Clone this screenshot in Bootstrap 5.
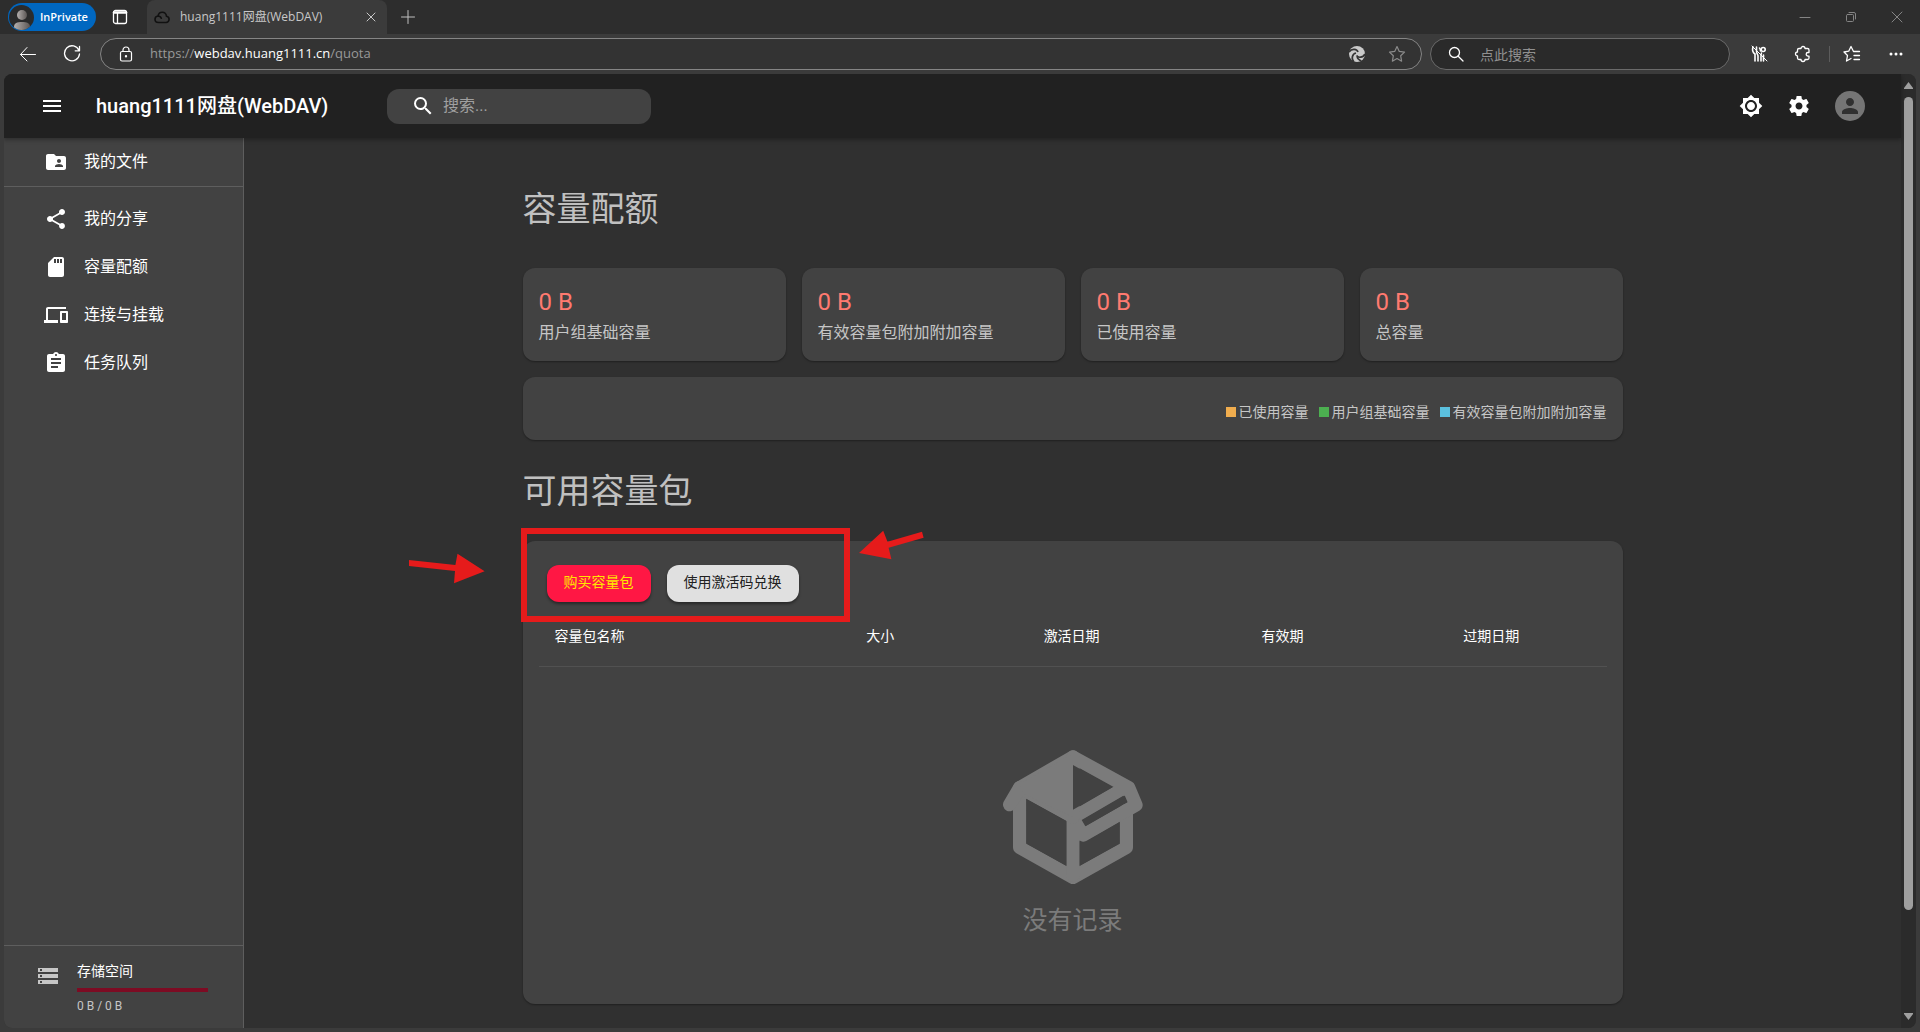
<!DOCTYPE html>
<html lang="zh-CN" data-bs-theme="dark">
<head>
<meta charset="utf-8">
<meta name="viewport" content="width=device-width, initial-scale=1">
<title>huang1111网盘(WebDAV)</title>
<link href="https://cdn.jsdelivr.net/npm/bootstrap@5.3.0/dist/css/bootstrap.min.css" rel="stylesheet">
<style>
:root{--app:Roboto,"Noto Sans CJK SC",sans-serif;--chrome:"Open Sans","Noto Sans CJK SC",sans-serif}
body{font-family:var(--app);background:#3b3b3b;color:#fff;font-size:16px}
svg{display:block;flex:none}
.solid{fill:currentColor}
.line{fill:none;stroke:currentColor;stroke-linecap:round;stroke-linejoin:round}
.plain{background:none;border:0;padding:0;color:inherit;display:flex;align-items:center;justify-content:center;flex:none}
/* browser window */
.titlebar{height:34px;background:#2d2d2d;font-family:var(--chrome);padding-left:8px}
.inprivate{height:28px;width:88px;border-radius:14px;background:#0067c0;color:#fff;font-size:11px;padding-left:1px;gap:6px;font-weight:600;justify-content:flex-start}
.tabicon{width:48px;margin-right:3px}
.browsertab{width:240px;background:#3b3b3b;border-radius:8px 8px 0 0;padding:0 10px 0 7px;font-size:12px;color:#c8c8c8}
.browsertab span{margin-left:10px}
.newtab{width:42px;color:#c0c0c0}
.winbtn{width:46px;height:34px;color:#858585}
.toolbar{height:40px;font-family:var(--chrome);padding:0 2px 0 6px}
.tool{width:44px;height:32px}
.urlbar{height:32px;border:1px solid #858585;border-radius:16px;background:#333;font-size:13px;color:#999;padding:0 6px 0 17px;margin-left:6px}
.urlbar b{font-weight:400;color:#fff}
.urlbar .star{color:#8b8b8b;width:36px}
.findbar{width:300px;height:32px;border:1px solid #6a6a6a;border-radius:16px;background:#2a2a2a;margin:0 7px 0 8px;padding:0 16px 0 17px}
.findbar input,.appsearch input{background:none;border:0;outline:0;min-width:0;padding:0;color:#ddd}
.findbar input{font-size:14px}
.findbar input::placeholder{color:#909090}
.toolsep{width:1px;height:16px;background:#5c5c5c}
/* page */
.page{margin:0 4px 4px;border-radius:8px;background:#303030}
.appbar{height:64px;background:#212121;box-shadow:0 2px 4px rgba(0,0,0,.3);padding:0 36px;z-index:2}
.brand{font-size:20px;font-weight:500;color:#fff;width:291px;margin-left:32px}
.appsearch{width:264px;height:35px;border-radius:12px;background:#424242;padding:0 8px 0 24px;gap:8px}
.appsearch input{font-size:16px}
.appsearch input::placeholder{color:#a0a0a0}
.avatar{width:30px;height:30px;border-radius:50%;background:#757575;color:#303030}
.side{width:240px;background:#424242;border-right:1px solid #5e5e5e}
.side a{height:48px;padding-left:40px;gap:16px;color:#fff;text-decoration:none}
.side .rule-bottom{height:49px}
.side ul{padding:8px 0}
.rule-top{border-top:1px solid #5e5e5e}
.rule-bottom{border-bottom:1px solid #5e5e5e}
.quota{padding:14px 35px 14px 32px;gap:17px}
.quota .meter{height:4px;background:#7d0b23;margin:6px 0}
.quota .name{font-size:14px;line-height:22px}
.quota .used{font-size:12px;line-height:16px;color:#c6c6c6}
.content{width:1100px;padding-top:50px}
.content h1{font-size:34px;line-height:42px;font-weight:400;color:#c0c0c0;margin:0}
.content .second{margin-top:30px}
.panel{background:#424242;border-radius:12px;box-shadow:0 1px 2px rgba(0,0,0,.35)}
.stats{margin-top:38px}
.stat{padding:16px}
.stat .value{font-size:24px;line-height:37px;color:#ff7a70}
.stat .label{font-size:16px;line-height:24px;color:#c6c6c6}
.legend-row{padding:24px 16px 17px;gap:10px;font-size:14px;line-height:22px;color:#c6c6c6}
.legend-row i{width:10px;height:10px;margin-right:3px}
.used-c{background:#f0ad4e}.base-c{background:#4caf50}.pack-c{background:#5bc0de}
.packs{margin-top:29px;padding:24px 16px 65px}
.pill{height:37px;border:0;border-radius:12px;padding:0 17px 3px;font-size:14px;box-shadow:0 2px 3px rgba(0,0,0,.4)}
.buy{background:#ff1744;color:#ffe600}
.redeem{background:#e0e0e0;color:#212121}
.packtable{width:100%;table-layout:fixed;margin-top:6px}
.packtable th{height:58px;padding:0 16px;font-size:14px;font-weight:400;border-bottom:1px solid #515151}
.void{padding-top:70px;color:#7b7b7b;font-size:25px;line-height:36px;gap:6px}
.note{left:-114px;top:-13px;pointer-events:none}
.scroll{width:15px;background:#2b2b2b;padding:8px 0;gap:8px}
.thumb{width:9px;height:813px;border-radius:5px;background:#9f9f9f}
</style>
<script src="https://cdn.jsdelivr.net/npm/bootstrap@5.3.0/dist/js/bootstrap.bundle.min.js"></script>
</head>
<body class="vh-100 d-flex flex-column overflow-hidden">
<header>
  <div class="titlebar d-flex align-items-center">
    <button class="plain inprivate" type="button">
      <svg width="25" height="25" viewBox="0 0 25 25"><defs><linearGradient id="g"><stop offset="0" stop-color="#b5b0ae"/><stop offset="1" stop-color="#5c5755"/></linearGradient><clipPath id="c"><circle cx="12.500" cy="12.500" r="12.500"/></clipPath></defs><circle cx="12.500" cy="12.500" r="12.500" fill="#2b2b2b"/><g clip-path="url(#c)" fill="url(#g)"><circle cx="13" cy="10" r="5"/><path d="M5 25v-3c0-4 3-5 8-5s8 1 8 5v3z"/></g></svg>InPrivate</button>
    <button class="plain tabicon" type="button" aria-label="标签页操作"><svg class="line" width="16" height="16" viewBox="0 0 16 16" stroke-width="1.300"><rect x="1.500" y="1.500" width="13" height="13" rx="2"/><path d="M2 3.500h12" stroke-width="2.500"/><path d="M5.500 4v10"/></svg></button>
    <div class="browsertab d-flex align-items-center align-self-stretch">
      <svg class="line" width="16" height="16" viewBox="0 0 16 16" stroke="#111" color="#111" stroke-width="1.600"><path d="M4.500 13.500C2.300 13.500 1 12 1 10.200 1 8.500 2.200 7.200 4 7c.5-2.400 2-3.700 4.200-3.700 2.400 0 4 1.600 4.300 4 1.700.2 2.600 1.500 2.600 3s-1.200 3.200-3 3.200zM4 7c1.600 0 2.800.9 3.300 2.300"/></svg>
      <span class="flex-grow-1 text-nowrap">huang1111网盘(WebDAV)</span>
      <button class="plain" type="button" aria-label="关闭标签页"><svg class="line" width="12" height="12" viewBox="0 0 12 12"><path d="M2 2l8 8M10 2l-8 8"/></svg></button>
    </div>
    <button class="plain newtab" type="button" aria-label="新建标签页"><svg class="line" width="16" height="16" viewBox="0 0 16 16"><path d="M8 1.500v13M1.500 8h13"/></svg></button>
    <div class="ms-auto d-flex">
      <button class="plain winbtn" type="button" aria-label="最小化"><svg class="line" width="12" height="12" viewBox="0 0 12 12"><path d="M1 6.500h10"/></svg></button>
      <button class="plain winbtn" type="button" aria-label="还原"><svg class="line" width="12" height="12" viewBox="0 0 12 12"><rect x="1.500" y="3.500" width="7" height="7" rx="1"/><path d="M4 1.500h5a1.500 1.500 0 0 1 1.500 1.500v5"/></svg></button>
      <button class="plain winbtn" type="button" aria-label="关闭"><svg class="line" width="12" height="12" viewBox="0 0 12 12"><path d="M1 1l10 10M11 1L1 11"/></svg></button>
    </div>
  </div>
  <div class="toolbar d-flex align-items-center">
    <button class="plain tool" type="button" aria-label="后退"><svg class="line" width="18" height="18" viewBox="0 0 18 18"><path d="M1.500 9.500h15M8 2.500l-6.500 7 6.500 6.500"/></svg></button>
    <button class="plain tool" type="button" aria-label="刷新"><svg class="line" width="18" height="18" viewBox="0 0 18 18" stroke-width="1.300"><path d="M16 5.500A7.500 7.500 0 1 0 16.500 9M16.500 1.500v4.300h-4.300"/></svg></button>
    <div class="urlbar d-flex align-items-center flex-grow-1">
      <svg class="line" width="16" height="16" viewBox="0 0 16 16" stroke-width="1.200" color="#fff"><rect x="2.500" y="5.500" width="11" height="9.500" rx="1.500"/><path d="M5 5.500V4a3 3 0 0 1 6 0v1.500"/><circle cx="8" cy="10.200" r=".6"/></svg>
      <div class="flex-grow-1 ms-3" role="textbox" contenteditable="true" spellcheck="false" aria-label="地址">https://<b>webdav.huang1111.cn</b>/quota</div>
      <button class="plain tool" type="button" aria-label="图标"><svg width="18" height="18" viewBox="0 0 18 18"><circle cx="9" cy="9" r="8" fill="#c9c9c9"/><path d="M1 7c3-4 8-3 9 0M17 9c-2 4-7 4-8.500 1.500M6 17c-3-3-2-8 2-9M9 12c1 3 3 3 4 4" fill="none" stroke="#333" stroke-width="1.700"/></svg></button>
      <button class="plain star" type="button" aria-label="收藏"><svg class="line" width="18" height="18" viewBox="0 0 18 18" stroke-width="1.200"><path d="M9 1.500l2.300 4.900 5.200.7-3.800 3.700.9 5.400L9 13.600l-4.600 2.600.9-5.400L1.500 7.100l5.200-.7z"/></svg></button>
    </div>
    <label class="findbar d-flex align-items-center">
      <svg class="line" width="16" height="16" viewBox="0 0 16 16" stroke-width="1.300" color="#fff"><circle cx="6.500" cy="6.500" r="5"/><path d="M10.200 10.200L15 15"/></svg>
      <input class="flex-grow-1 ms-3" type="text" placeholder="点此搜索" aria-label="点此搜索">
    </label>
    <button class="plain tool" type="button" aria-label="扩展"><svg class="line" width="18" height="18" viewBox="0 0 18 18" stroke-width="1.600"><path d="M3 2c-1 3-1 5 2 7v7M6.500 2v4c0 3 1.500 3 1.500 5v5M11 16v-5c0-2 0-2 .5-3M13.500 10v6M9.500 3c1 1 1 2 1 3"/><circle cx="13.200" cy="4.500" r="2"/><path d="M2 1l15 15" stroke-width="1"/></svg></button>
    <button class="plain tool" type="button" aria-label="扩展管理"><svg class="line" width="18" height="18" viewBox="0 0 18 18" stroke-width="1.300"><path d="M5 3.500h2a2 2 0 0 1 4 0h2.500a1.500 1.500 0 0 1 1.500 1.500v2.500h-1a1.800 1.800 0 0 0 0 3.600h1V13a1.500 1.500 0 0 1-1.500 1.500H11a2 2 0 0 1-4 0H5A1.500 1.500 0 0 1 3.500 13v-2a2 2 0 0 1 0-4V5A1.500 1.500 0 0 1 5 3.500z"/></svg></button>
    <div class="toolsep ms-1"></div>
    <button class="plain tool" type="button" aria-label="收藏夹"><svg class="line" width="18" height="18" viewBox="0 0 18 18" stroke-width="1.300"><path d="M10.500 6.500L8 1.500 5.700 6.200 1 7l3.500 3.500-1 5.500L8 13.500M10.500 6.500h6M11 10.500h5.500M11 14.500h5.500"/></svg></button>
    <button class="plain tool" type="button" aria-label="更多"><svg class="solid" width="18" height="18" viewBox="0 0 18 18"><circle cx="4" cy="9" r="1.500"/><circle cx="9" cy="9" r="1.500"/><circle cx="14" cy="9" r="1.500"/></svg></button>
  </div>
</header>

<div class="page d-flex flex-grow-1 overflow-hidden">
  <div class="d-flex flex-column flex-grow-1">
    <nav class="appbar d-flex align-items-center position-relative">
      <button class="plain" type="button" aria-label="菜单"><svg class="solid" width="24" height="24" viewBox="0 0 24 24"><path d="M3 18h18v-2H3v2zm0-5h18v-2H3v2zm0-7v2h18V6H3z"/></svg></button>
      <span class="brand text-nowrap">huang1111网盘(WebDAV)</span>
      <label class="appsearch d-flex align-items-center">
        <svg class="solid" width="24" height="24" viewBox="0 0 24 24"><path d="M15.500 14h-.79l-.28-.27A6.471 6.471 0 0 0 16 9.500 6.500 6.500 0 1 0 9.500 16c1.610 0 3.090-.59 4.230-1.570l.27.28v.79l5 4.990L20.490 19l-4.990-5zm-6 0C7.010 14 5 11.990 5 9.500S7.010 5 9.500 5 14 7.010 14 9.500 11.990 14 9.500 14z"/></svg>
        <input class="flex-grow-1" type="text" placeholder="搜索..." aria-label="搜索">
      </label>
      <div class="ms-auto d-flex align-items-center gap-4">
        <button class="plain" type="button" aria-label="切换主题"><svg class="solid" width="24" height="24" viewBox="0 0 24 24"><path d="M20 8.690V4h-4.690L12 .69 8.690 4H4v4.690L.69 12 4 15.310V20h4.690L12 23.310 15.310 20H20v-4.690L23.310 12 20 8.690zM12 18c-3.310 0-6-2.690-6-6s2.690-6 6-6 6 2.690 6 6-2.690 6-6 6zm0-10c-2.210 0-4 1.790-4 4s1.790 4 4 4 4-1.790 4-4-1.790-4-4-4z"/></svg></button>
        <button class="plain" type="button" aria-label="设置"><svg class="solid" width="24" height="24" viewBox="0 0 24 24"><path d="M19.430 12.980c.04-.32.07-.64.07-.98s-.03-.66-.07-.98l2.110-1.650c.19-.15.24-.42.12-.64l-2-3.460c-.12-.22-.39-.3-.61-.22l-2.490 1c-.52-.4-1.080-.73-1.690-.98l-.38-2.650C14.460 2.180 14.250 2 14 2h-4c-.25 0-.46.18-.49.42l-.38 2.650c-.61.25-1.170.59-1.690.98l-2.490-1c-.23-.09-.49 0-.61.22l-2 3.460c-.13.22-.07.49.12.64l2.110 1.650c-.04.32-.07.65-.07.98s.03.66.07.98l-2.110 1.650c-.19.15-.24.42-.12.64l2 3.460c.12.22.39.3.61.22l2.490-1c.52.4 1.080.73 1.690.98l.38 2.650c.03.24.24.42.49.42h4c.25 0 .46-.18.49-.42l.38-2.650c.61-.25 1.170-.59 1.690-.98l2.490 1c.23.09.49 0 .61-.22l2-3.460c.12-.22.07-.49-.12-.64l-2.110-1.650zM12 15.500c-1.930 0-3.500-1.570-3.500-3.500s1.570-3.500 3.500-3.500 3.500 1.570 3.500 3.500-1.570 3.500-3.500 3.500z"/></svg></button>
        <button class="plain avatar" type="button" aria-label="用户"><svg class="solid" width="24" height="24" viewBox="0 0 24 24"><path d="M12 12c2.210 0 4-1.790 4-4s-1.790-4-4-4-4 1.790-4 4 1.790 4 4 4zm0 2c-2.670 0-8 1.340-8 4v2h16v-2c0-2.660-5.330-4-8-4z"/></svg></button>
      </div>
    </nav>
    <div class="d-flex flex-grow-1">
      <aside class="side d-flex flex-column flex-shrink-0">
        <a class="d-flex align-items-center rule-bottom" href="#"><svg class="solid" width="24" height="24" viewBox="0 0 24 24"><path d="M20 6h-8l-2-2H4c-1.100 0-1.990.9-1.990 2L2 18c0 1.100.9 2 2 2h16c1.100 0 2-.9 2-2V8c0-1.100-.9-2-2-2zm-5 3c1.100 0 2 .9 2 2s-.9 2-2 2-2-.9-2-2 .9-2 2-2zm4 8h-8v-1c0-1.330 2.670-2 4-2s4 .67 4 2v1z"/></svg>我的文件</a>
        <ul class="list-unstyled mb-auto">
          <li><a class="d-flex align-items-center" href="#"><svg class="solid" width="24" height="24" viewBox="0 0 24 24"><path d="M18 16.080c-.76 0-1.440.3-1.960.77L8.910 12.700c.05-.23.09-.46.09-.7s-.04-.47-.09-.7l7.050-4.110c.54.5 1.250.81 2.040.81 1.660 0 3-1.340 3-3s-1.340-3-3-3-3 1.340-3 3c0 .24.04.47.09.7L8.040 9.810C7.500 9.310 6.790 9 6 9c-1.660 0-3 1.340-3 3s1.340 3 3 3c.79 0 1.500-.31 2.040-.81l7.120 4.160c-.05.21-.08.43-.08.65 0 1.610 1.310 2.920 2.920 2.920s2.920-1.310 2.920-2.920-1.310-2.920-2.920-2.920z"/></svg>我的分享</a></li>
          <li><a class="d-flex align-items-center" href="#"><svg class="solid" width="24" height="24" viewBox="0 0 24 24"><path d="M18 2h-8L4.020 8 4 20c0 1.100.9 2 2 2h12c1.100 0 2-.9 2-2V4c0-1.100-.9-2-2-2zm-6 6h-2V4h2v4zm3 0h-2V4h2v4zm3 0h-2V4h2v4z"/></svg>容量配额</a></li>
          <li><a class="d-flex align-items-center" href="#"><svg class="solid" width="24" height="24" viewBox="0 0 24 24"><path d="M4 6h18V4H4c-1.100 0-2 .9-2 2v11H0v3h14v-3H4V6zm19 2h-6c-.55 0-1 .45-1 1v10c0 .55.45 1 1 1h6c.55 0 1-.45 1-1V9c0-.55-.45-1-1-1zm-1 9h-4v-7h4v7z"/></svg>连接与挂载</a></li>
          <li><a class="d-flex align-items-center" href="#"><svg class="solid" width="24" height="24" viewBox="0 0 24 24"><path d="M19 3h-4.180C14.400 1.840 13.300 1 12 1c-1.300 0-2.400.84-2.820 2H5c-1.100 0-2 .9-2 2v14c0 1.100.9 2 2 2h14c1.100 0 2-.9 2-2V5c0-1.100-.9-2-2-2zm-7 0c.55 0 1 .45 1 1s-.45 1-1 1-1-.45-1-1 .45-1 1-1zm2 14H7v-2h7v2zm3-4H7v-2h10v2zm0-4H7V7h10v2z"/></svg>任务队列</a></li>
        </ul>
        <div class="quota rule-top d-flex">
          <svg class="mt-1" width="24" height="24" viewBox="0 0 24 24" fill="#c6c6c6"><path d="M2 20h20v-4H2v4zm2-3h2v2H4v-2zM2 4v4h20V4H2zm4 3H4V5h2v2zm-4 7h20v-4H2v4zm2-3h2v2H4v-2z"/></svg>
          <div class="flex-grow-1">
            <div class="name">存储空间</div>
            <div class="meter" role="progressbar" aria-label="存储空间" aria-valuenow="0"></div>
            <div class="used">0 B / 0 B</div>
          </div>
        </div>
      </aside>
      <main class="flex-grow-1">
        <div class="content mx-auto">
          <h1>容量配额</h1>
          <div class="stats row gx-3">
            <div class="col-3"><div class="panel stat"><div class="value">0 B</div><div class="label">用户组基础容量</div></div></div>
            <div class="col-3"><div class="panel stat"><div class="value">0 B</div><div class="label">有效容量包附加附加容量</div></div></div>
            <div class="col-3"><div class="panel stat"><div class="value">0 B</div><div class="label">已使用容量</div></div></div>
            <div class="col-3"><div class="panel stat"><div class="value">0 B</div><div class="label">总容量</div></div></div>
          </div>
          <div class="panel legend-row mt-3 d-flex justify-content-end">
            <span class="d-flex align-items-center"><i class="used-c"></i>已使用容量</span>
            <span class="d-flex align-items-center"><i class="base-c"></i>用户组基础容量</span>
            <span class="d-flex align-items-center"><i class="pack-c"></i>有效容量包附加附加容量</span>
          </div>
          <h1 class="second">可用容量包</h1>
          <section class="panel packs position-relative">
            <div class="d-flex gap-3 ps-2">
              <button class="pill buy" type="button">购买容量包</button>
              <button class="pill redeem" type="button">使用激活码兑换</button>
            </div>
            <table class="packtable">
              <colgroup><col style="width:29.2%"><col style="width:16.6%"><col style="width:20.4%"><col style="width:18.9%"><col style="width:14.9%"></colgroup>
              <thead><tr><th scope="col">容量包名称</th><th scope="col">大小</th><th scope="col">激活日期</th><th scope="col">有效期</th><th scope="col">过期日期</th></tr></thead>
            </table>
            <div class="void d-flex flex-column align-items-center">
              <svg width="160" height="160" viewBox="99 110 480 480"><g fill="none" stroke="currentColor" stroke-width="40" stroke-linejoin="round" stroke-linecap="round"><path d="M179 300V441L339 531 499 441V330"/><path d="M339 350V525M179 262L339 170 506 262 528 314 370 404 344 350 495 262"/><path d="M149 313L179 262 339 350V170"/></g><path fill="currentColor" d="M179 250L339 160V350L190 280z"/><path fill="#424242" d="M339 194L457 261 339 328zM199 296L319 363V496L199 430zM365 359L490 286 501 306 376 378zM359 423Q372 428 384 421L479 365V430L359 496z"/></svg>
              <span>没有记录</span>
            </div>
            <svg class="note position-absolute" width="515" height="94" viewBox="0 0 515 94" fill="#e61b1b" aria-hidden="true"><rect x="115" y="3" width="323" height="88" fill="none" stroke="#e61b1b" stroke-width="6"/><path d="M0 32l46.400 5 2.100-11.300 27.100 17.600L45 55.300 46 43 0 38z"/><path d="M513 3.700l1.600 6-35 10 2.800 11.600L450 25l24.200-22.300 4.300 11z"/></svg>
          </section>
        </div>
      </main>
    </div>
  </div>
  <div class="scroll d-flex flex-column align-items-center" aria-hidden="true">
    <svg width="9" height="7" viewBox="0 0 9 7" fill="#9f9f9f"><path d="M4.500 0L9 6v1H0V6z"/></svg>
    <div class="thumb"></div>
    <svg class="mt-auto" width="9" height="7" viewBox="0 0 9 7" fill="#9f9f9f"><path d="M4.500 7L9 1V0H0v1z"/></svg>
  </div>
</div>
</body>
</html>
